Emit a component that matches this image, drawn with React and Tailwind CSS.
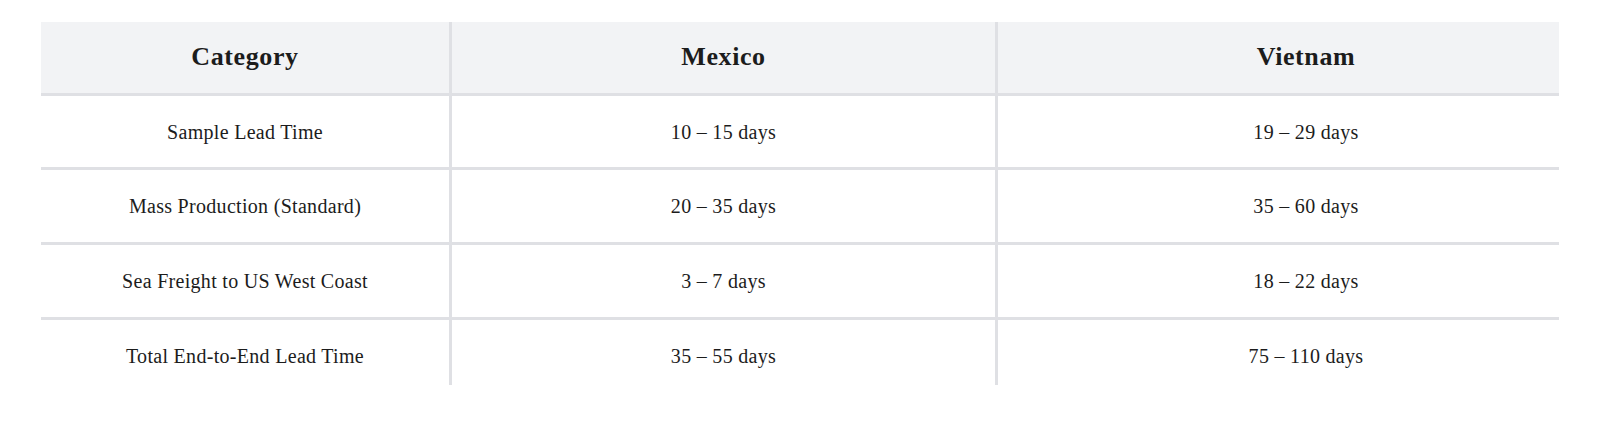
const rows = [
  ['Sample Lead Time', '10 – 15 days', '19 – 29 days'],
  ['Mass Production (Standard)', '20 – 35 days', '35 – 60 days'],
  ['Sea Freight to US West Coast', '3 – 7 days', '18 – 22 days'],
  ['Total End-to-End Lead Time', '35 – 55 days', '75 – 110 days'],
]

const heights = ['h-[74px]', 'h-[75px]', 'h-[75px]', 'h-[74px]']

export default function App() {
  return (
    <div className="w-[1600px] h-[428px] bg-white pt-[22px] pl-[41px] font-['Liberation_Serif','DejaVu_Serif',serif] text-[#1c1c1c]">
      <div className="w-[1518px] h-[363px] overflow-hidden">
        <div className="w-[1573px]">
          {/* header */}
          <div className="grid grid-cols-[411px_546px_616px] h-[74px] bg-[#f2f3f5] border-b-[3px] border-[#dfe0e4] text-[26px] font-bold tracking-[0.6px]">
            <div className="flex items-center justify-center pb-[2px] border-r-[3px] border-[#dfe0e4]">Category</div>
            <div className="flex items-center justify-center pb-[2px] border-r-[3px] border-[#dfe0e4]">Mexico</div>
            <div className="flex items-center justify-center pb-[2px]">Vietnam</div>
          </div>
          {rows.map((r, i) => (
            <div key={i} className={`grid grid-cols-[411px_546px_616px] ${heights[i]} border-b-[3px] border-[#dfe0e4] text-[20px] tracking-[0.3px]`}>
              <div className="flex items-center justify-center border-r-[3px] border-[#dfe0e4]">{r[0]}</div>
              <div className="flex items-center justify-center border-r-[3px] border-[#dfe0e4]">{r[1]}</div>
              <div className="flex items-center justify-center">{r[2]}</div>
            </div>
          ))}
        </div>
      </div>
    </div>
  )
}
